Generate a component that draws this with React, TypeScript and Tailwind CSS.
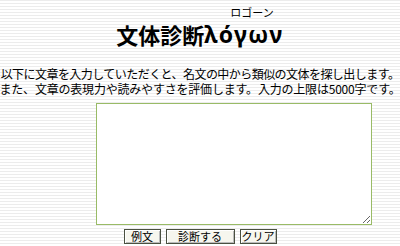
import React from "react";

export default function App() {
  const jp = { fontFamily: '"Noto Sans CJK JP", "Noto Sans", sans-serif' } as React.CSSProperties;
  const gr = { fontFamily: '"Noto Sans", "DejaVu Sans", sans-serif' } as React.CSSProperties;
  return (
    <div
      className="w-[400px] h-[246px] overflow-hidden flex flex-col items-center text-black bg-[repeating-linear-gradient(to_bottom,#ececec_0px,#ececec_1px,#ffffff_1px,#ffffff_3px)]"
      style={jp}
    >
      <div className="flex items-end justify-center mt-[5px] h-[41px]">
        <span className="text-[22px] leading-[24px] font-bold">文体診断</span>
        <span className="flex flex-col items-center">
          <span className="text-[11px] leading-[12px] ml-[16px] mb-[4px]">ロゴーン</span>
          <span className="text-[23px] leading-[24px] font-bold tracking-[1.5px]" style={gr}>λόγων</span>
        </span>
      </div>
      <div className="mt-[20px] text-[12px] leading-[15px] tracking-[-0.55px] text-center whitespace-nowrap">
        <div>以下に文章を入力していただくと、名文の中から類似の文体を探し出します。</div>
        <div className="tracking-[-0.2px]">また、文章の表現力や読みやすさを評価します。入力の上限は5000字です。</div>
      </div>
      <textarea className="mt-[7px] w-[276px] h-[122px] border border-[#99bb66] bg-white outline-none p-[2px] text-[12px] ml-[96px] self-start" />
      <div className="flex gap-[5px] mt-[4px]">
        <button className="w-[37px] h-[15px] text-[11px] leading-[13px] border border-[#4a5040] bg-[#f6f6ee] shadow-[inset_1px_1px_0_#fff,inset_-1px_-1px_0_#bbb] flex items-center justify-center">例文</button>
        <button className="w-[69px] h-[15px] text-[11px] leading-[13px] border border-[#4a5040] bg-[#f6f6ee] shadow-[inset_1px_1px_0_#fff,inset_-1px_-1px_0_#bbb] flex items-center justify-center">診断する</button>
        <button className="w-[37px] h-[15px] text-[11px] leading-[13px] border border-[#4a5040] bg-[#f6f6ee] shadow-[inset_1px_1px_0_#fff,inset_-1px_-1px_0_#bbb] flex items-center justify-center">クリア</button>
      </div>
    </div>
  );
}
